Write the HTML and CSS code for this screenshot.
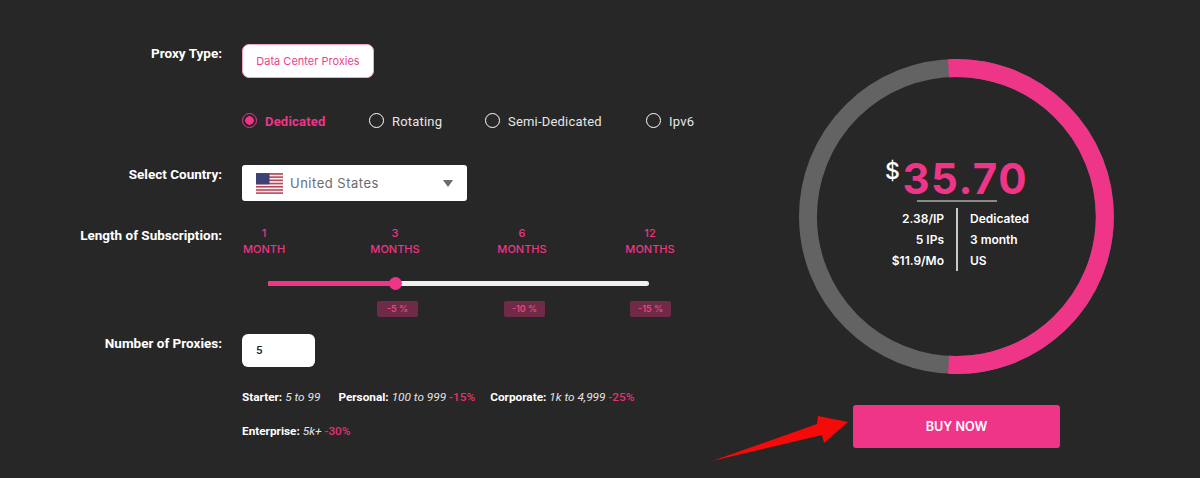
FILE: index.html
```html
<!DOCTYPE html>
<html lang="en">
  <head>
    <meta charset="UTF-8" />
    <meta name="viewport" content="width=device-width, initial-scale=1.0" />
    <title>Proxy Pricing</title>
    <link rel="stylesheet" href="styles.css">
  </head>
  <body>
    <main class="container">
      <!-- Order form -->
      <section class="order-form">
        <div class="row row-type">
          <label class="row-label">Proxy Type:</label>
          <div class="row-body">
            <button class="type-btn">Data Center Proxies</button>
          </div>
        </div>

        <div class="row row-radios">
          <div class="row-label"></div>
          <div class="row-body radios">
            <span class="radio radio-dedicated active"><i></i>Dedicated</span>
            <span class="radio radio-rotating"><i></i>Rotating</span>
            <span class="radio radio-semi"><i></i>Semi-Dedicated</span>
            <span class="radio"><i></i>Ipv6</span>
          </div>
        </div>

        <div class="row row-country">
          <label class="row-label">Select Country:</label>
          <div class="row-body">
            <div class="select">
              <svg class="flag" viewBox="0 0 26 20" width="27" height="21">
                <rect width="26" height="20" fill="#f4eeee" />
                <g fill="#b5475a">
                  <rect width="26" height="1.6" />
                  <rect y="3.1" width="26" height="1.5" />
                  <rect y="6.2" width="26" height="1.5" />
                  <rect y="9.3" width="26" height="1.5" />
                  <rect y="12.4" width="26" height="1.5" />
                  <rect y="15.5" width="26" height="1.5" />
                  <rect y="18.5" width="26" height="1.5" />
                </g>
                <rect width="13" height="10.8" fill="#3c4374" />
              </svg>
              <span class="select-text">United States</span>
              <span class="caret"></span>
            </div>
          </div>
        </div>

        <div class="row row-length">
          <label class="row-label">Length of Subscription:</label>
          <div class="row-body">
            <div class="steps months">
              <span>1<br />MONTH</span>
              <span>3<br />MONTHS</span>
              <span>6<br />MONTHS</span>
              <span>12<br />MONTHS</span>
            </div>
            <div class="slider">
              <div class="slider-fill"></div>
              <div class="slider-thumb"></div>
            </div>
            <div class="steps discounts">
              <span></span>
              <span class="badge">-5 %</span>
              <span class="badge">-10 %</span>
              <span class="badge">-15 %</span>
            </div>
          </div>
        </div>

        <div class="row row-number">
          <label class="row-label">Number of Proxies:</label>
          <div class="row-body">
            <div class="qty">5</div>
            <p class="tiers">
              <span class="tier-first"><b>Starter:</b> <em>5 to 99</em></span>
              <span><b>Personal:</b> <em>100 to 999</em> <strong>-15%</strong></span>
              <span><b>Corporate:</b> <em>1k to 4,999</em> <strong>-25%</strong></span>
            </p>
            <p class="tiers tiers-last">
              <span><b>Enterprise:</b> <em>5k+</em> <strong>-30%</strong></span>
            </p>
          </div>
        </div>
      </section>

      <!-- Price ring and buy button -->
      <aside class="summary">
        <div class="ring">
          <svg class="ring-svg" viewBox="0 0 316 316" width="315" height="315">
            <circle cx="158" cy="158" r="149" fill="none" stroke="#636363" stroke-width="18" />
            <path d="M150 9.2 A149 149 0 1 1 150 306.8" fill="none" stroke="#ee3588" stroke-width="18" />
          </svg>
          <div class="ring-inner">
            <div class="price"><sup>$</sup><span>35.70</span></div>
            <div class="facts">
              <div class="facts-left">
                <p>2.38/IP</p>
                <p>5 IPs</p>
                <p>$11.9/Mo</p>
              </div>
              <div class="facts-right">
                <p>Dedicated</p>
                <p>3 month</p>
                <p>US</p>
              </div>
            </div>
          </div>
        </div>
        <button class="buy-btn">BUY NOW</button>
      </aside>

      <svg class="arrow" viewBox="0 0 140 50" width="140" height="50">
        <polygon points="1,46 106,9 107,1 137,7 113,28 111,20" fill="#f50a0a" />
      </svg>
    </main>
  </body>
</html>
```

FILE: styles.css
```css
* {
  margin: 0;
  padding: 0;
  box-sizing: border-box;
}

html,
body {
  height: 100%;
  width: 100%;
}

body {
  background-color: #272727;
  color: #fff;
  font-family: Roboto, "Liberation Sans", sans-serif;
  overflow: hidden;
}

.container {
  position: relative;
  height: 478px;
  display: flex;
  flex-direction: row;
}

/* Form */
.order-form {
  width: 799px;
  padding-top: 44px;
}

.row {
  display: flex;
  flex-direction: row;
  gap: 20px;
}

.row-label {
  width: 222px;
  flex-shrink: 0;
  text-align: right;
  font-size: 13.5px;
  font-weight: 700;
  line-height: 19px;
}

.row-body {
  flex: 1;
}

.type-btn {
  display: block;
  width: 132px;
  height: 34px;
  background-color: #fff;
  border: 1px solid #f5a3c6;
  border-radius: 7px;
  color: #ee3f8c;
  font-family: Inter, sans-serif;
  font-size: 11px;
  font-weight: 400;
}

.row-radios {
  margin-top: 32px;
}

.radios {
  display: flex;
  height: 20px;
  align-items: center;
}

.radio {
  display: flex;
  align-items: center;
  gap: 8px;
  margin-top: 2px;
  font-size: 13px;
  font-weight: 400;
  color: #e6e6e6;
  letter-spacing: 0.2px;
}

.radio i {
  width: 15px;
  height: 15px;
  margin-top: -2px;
  border: 1.5px solid #fff;
  border-radius: 50%;
}

.radio-dedicated {
  width: 127px;
}

.radio-rotating {
  width: 116px;
}

.radio-semi {
  width: 161px;
}

.radio.active {
  color: #ee3588;
  font-weight: 700;
}

.radio.active i {
  border-color: #ee3588;
  background: radial-gradient(circle, #ee3588 0 4px, transparent 4.5px);
}

.row-country {
  margin-top: 35px;
}

.select {
  display: flex;
  align-items: center;
  width: 225px;
  height: 36px;
  padding: 0 14px;
  background-color: #fff;
  border-radius: 3px;
}

.select-text {
  flex: 1;
  margin-left: 7px;
  color: #6b6b6b;
  font-family: Inter, sans-serif;
  font-size: 13px;
  letter-spacing: 0.5px;
}

.caret {
  width: 0;
  height: 0;
  border-left: 5.5px solid transparent;
  border-right: 5.5px solid transparent;
  border-top: 7px solid #6b6b6b;
}

.row-length {
  margin-top: 25px;
}

.steps {
  display: grid;
  grid-template-columns: 131px 127px 128px 44px;
  text-align: center;
}

.months {
  margin-top: -1px;
  color: #ee3588;
  font-family: Inter, sans-serif;
  font-size: 11px;
  font-weight: 500;
  line-height: 16px;
}

.months span {
  width: 50px;
  margin-left: -3px;
  white-space: nowrap;
}

.slider {
  position: relative;
  width: 381px;
  height: 5px;
  margin: 24px 0 0 26px;
  background-color: #efefef;
  border-radius: 3px;
}

.slider-fill {
  width: 127px;
  height: 100%;
  background-color: #ee3588;
  border-radius: 3px;
}

.slider-thumb {
  position: absolute;
  left: 121px;
  top: -4px;
  width: 13px;
  height: 13px;
  background-color: #ee3588;
  border-radius: 50%;
}

.discounts {
  grid-template-columns: 135px 127px 126px 42px;
  margin-top: 15px;
  height: 16px;
}

.badge {
  width: 41px;
  height: 16px;
  background-color: #6f2a48;
  border-radius: 2px;
  color: #e5477f;
  font-family: Inter, sans-serif;
  font-size: 9px;
  font-weight: 600;
  line-height: 16px;
}

.row-number {
  margin-top: 17px;
}

.qty {
  width: 73px;
  height: 33px;
  padding-left: 14px;
  background-color: #fff;
  border-radius: 6px;
  color: #222;
  font-size: 11.5px;
  font-weight: 500;
  line-height: 33px;
}

.tiers {
  display: flex;
  gap: 15px;
  margin-top: 23px;
  font-size: 11.8px;
  line-height: 14px;
  color: #e4e4e4;
  white-space: nowrap;
}

.tier-first {
  margin-right: 3px;
}

.tiers b {
  color: #fff;
}

.tiers strong {
  color: #e5306f;
  font-weight: 500;
}

.tiers-last {
  margin-top: 20px;
}

/* Price ring */
.summary {
  width: 315px;
  padding-top: 59px;
  display: flex;
  flex-direction: column;
  align-items: center;
}

.ring {
  display: grid;
  place-items: center;
  width: 315px;
  height: 315px;
}

.ring-svg,
.ring-inner {
  grid-area: 1 / 1;
}

.ring-inner {
  display: flex;
  flex-direction: column;
  align-items: center;
  padding-bottom: 6px;
  font-family: Inter, sans-serif;
}

.price {
  display: flex;
  align-items: flex-start;
  padding: 0 2px 1px;
  margin-bottom: 6px;
  color: #ee3588;
  font-size: 42px;
  font-weight: 700;
  letter-spacing: 1.5px;
  line-height: 44px;
}

.price sup {
  color: #fff;
  font-size: 23px;
  font-weight: 500;
  line-height: 28px;
  margin-right: 1px;
}

.facts {
  display: flex;
  flex-direction: row;
  font-size: 12px;
  font-weight: 600;
  line-height: 21px;
  position: relative;
}

.facts::before {
  content: "";
  position: absolute;
  left: 50%;
  top: -8px;
  width: 80px;
  margin-left: -40px;
  border-top: 2px solid #8a8a8a;
}

.facts-left {
  width: 74px;
  padding-right: 12px;
  text-align: right;
  border-right: 2px solid #c9c9c9;
}

.facts-right {
  width: 71px;
  padding-left: 12px;
  white-space: nowrap;
}

.buy-btn {
  width: 207px;
  height: 43px;
  margin-top: 31px;
  background-color: #ee3588;
  border: 0;
  border-radius: 3px;
  color: #fff;
  font-family: Inter, sans-serif;
  font-size: 12.6px;
  font-weight: 600;
}

/* Annotation arrow */
.arrow {
  position: absolute;
  left: 711px;
  top: 415px;
}
```
